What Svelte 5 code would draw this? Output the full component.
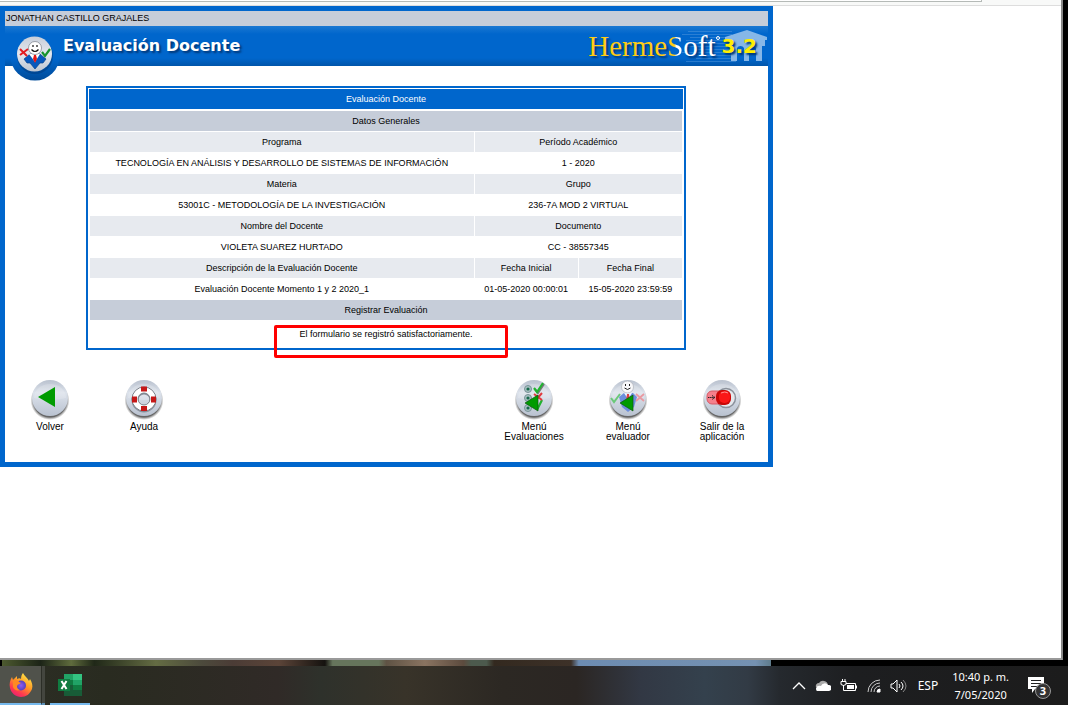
<script>
  const user = 'JONATHAN CASTILLO GRAJALES';
  const sections = [
    ['Programa', 'Período Académico', 'TECNOLOGÍA EN ANÁLISIS Y DESARROLLO DE SISTEMAS DE INFORMACIÓN', '1 - 2020'],
    ['Materia', 'Grupo', '53001C - METODOLOGÍA DE LA INVESTIGACIÓN', '236-7A MOD 2 VIRTUAL'],
    ['Nombre del Docente', 'Documento', 'VIOLETA SUAREZ HURTADO', 'CC - 38557345']
  ];
  const left = [
    { id: 'back', label: ['Volver'] },
    { id: 'help', label: ['Ayuda'] }
  ];
  const right = [
    { id: 'list', label: ['Menú', 'Evaluaciones'] },
    { id: 'person', label: ['Menú', 'evaluador'] },
    { id: 'exit', label: ['Salir de la', 'aplicación'] }
  ];
</script>

{#snippet disc(id)}
  <svg class="disc" viewBox="0 0 40 40" aria-hidden="true">
    <defs>
      <linearGradient id="face-{id}" x1="0" y1="0" x2="0" y2="1">
        <stop offset="0" stop-color="#b9c1ce" />
        <stop offset=".35" stop-color="#dce2eb" />
        <stop offset="1" stop-color="#b9c2d0" />
      </linearGradient>
      <radialGradient id="shade-{id}">
        <stop offset=".85" stop-color="#555" stop-opacity=".9" />
        <stop offset="1" stop-color="#888" stop-opacity="0" />
      </radialGradient>
    </defs>
    <circle cx="20" cy="20.500" r="19.500" fill="url(#shade-{id})" />
    <circle cx="20" cy="18" r="18" fill="url(#face-{id})" />
    <path d="M4 18a16 14 0 0 1 32 0q-16 4-32 0z" fill="#fff" opacity=".18" />
    {#if id === 'back'}
      <path d="M8 17 25 7v20z" fill="#009b00" />
    {:else if id === 'help'}
      <circle cx="20" cy="20" r="9" fill="none" stroke="#8b929d" stroke-width="7" />
      <circle cx="20" cy="19" r="9" fill="none" stroke="#fff" stroke-width="6" />
      <circle cx="20" cy="19" r="12" fill="none" stroke="#70767f" stroke-width=".9" />
      <circle cx="20" cy="19" r="6" fill="none" stroke="#70767f" stroke-width=".9" />
      <path d="M17 6.500h6v5h-6zM17 26h6v5h-6zM8 16.500h5v6H8zM27 16.500h5v6h-5z" fill="#c51818" />
    {:else if id === 'list'}
      {#each [9, 18, 28] as y}
        <circle cx="14" cy={y} r="3.500" fill="#a9bfc2" stroke="#779297" />
        <circle cx="14" cy={y} r="1.600" fill="#176a4b" />
      {/each}
      <path d="m20 8 3 4 6-9" fill="none" stroke="#777" stroke-width="2" transform="translate(1 1)" />
      <path d="m20 8 3 4 6-9M21 25l3 3 4-8" fill="none" stroke="#20b32f" stroke-width="2.200" />
      <path d="m20 14 8 6m0-7-7 8" stroke="#e13a3e" stroke-width="2" />
      <path d="M11 23 24 15v16z" fill="#009b00" stroke="#0b580b" stroke-width=".7" />
    {:else if id === 'person'}
      <path d="m11 17 5-4h9l4 4-3 10-6 5-6-5z" fill="#6c8edb" />
      <path d="m16 13 4 6 4-6-4-2z" fill="#f2f5ff" />
      <path d="m19 14 2 0 1 7-2 3-2-3z" fill="#d94040" />
      <circle cx="19.500" cy="7" r="6" fill="#f8f8fa" stroke="#adb1b9" stroke-width=".7" />
      <path d="M17.500 4v2M21.500 4v2M16.500 8q3 3 6 0" fill="none" stroke="#222" />
      <path d="m3 18 3 4 6-8" fill="none" stroke="#6ac978" stroke-width="2" />
      <path d="m28 14 8 7m0-7-8 7" stroke="#e99aa2" stroke-width="1.800" />
      <path d="M12 23 25 15v16z" fill="#009b00" stroke="#0b580b" stroke-width=".7" />
    {:else}
      <circle cx="24" cy="18" r="9.500" fill="#e5e8ed" stroke="#8b919b" stroke-width="1.500" />
      <rect x="5" y="11" width="19" height="13" rx="5" fill="#f5808c" stroke="#d65b66" />
      <path d="M6 17.500h7m-3-2 3 2-3 2" fill="none" stroke="#222" stroke-dasharray="1.500 .6" />
      <rect x="14" y="10" width="15" height="15" rx="6" fill="#c90808" />
      <rect x="17" y="11" width="11" height="12" rx="5" fill="#fa1717" />
      <path d="M19 13q4-2 7 0" stroke="#ff8b8b" fill="none" />
    {/if}
  </svg>
{/snippet}

{#snippet action(item)}
  <button class="action">
    {@render disc(item.id)}
    <span>{#each item.label as line}<span class="line">{line}</span>{/each}</span>
  </button>
{/snippet}

<div class="desktop">
  <div class="window">
    <div class="chrome"><div class="urlbar"></div></div>
    <main>
      <div class="user">{user}</div>
      <header>
        <svg class="badge" viewBox="0 0 50 50" aria-hidden="true">
          <defs>
            <linearGradient id="ring" x1="0" y1="0" x2="0" y2="1">
              <stop offset=".55" stop-color="#0066cc" />
              <stop offset="1" stop-color="#004b99" />
            </linearGradient>
            <linearGradient id="plate" x1="0" y1="0" x2="0" y2="1">
              <stop offset="0" stop-color="#c7ced9" />
              <stop offset=".5" stop-color="#e4e8ef" />
              <stop offset="1" stop-color="#bcc4d0" />
            </linearGradient>
          </defs>
          <circle cx="25" cy="25" r="24.500" fill="url(#ring)" />
          <circle cx="25" cy="25" r="18" fill="#003f86" opacity=".6" />
          <circle cx="24.500" cy="23" r="17.500" fill="url(#plate)" />
          <path d="m14 28 6-5h10l6 5-3 4h-3l-5 6-5-6h-3z" fill="#0758bd" stroke="#07438d" stroke-width=".7" />
          <path d="m19 23 6 8 5-8z" fill="#fff" />
          <path d="m24 24h2l1 4-2 4-2-4z" fill="#e31616" />
          <circle cx="25" cy="17" r="6.500" fill="#fff" stroke="#858a94" stroke-width=".8" />
          <path d="M23 14v2M27 14v2M21.500 18.500q3.500 4 7 0" fill="none" stroke="#111" stroke-width="1.200" />
          <path d="m10 18 7 7m1-7-8 6" stroke="#e21d22" stroke-width="2" />
          <path d="m32 21 3 4 5-7" fill="none" stroke="#16932d" stroke-width="2.200" />
        </svg>
        <h1>Evaluación Docente</h1>
        <svg class="temple" viewBox="0 0 86 40" aria-hidden="true">
          <path d="M6 5.500h44M0 8.500h50M8 11.500h46M4 14.500h50M10 17.500h44M5 20.500h49M12 23.500h42M0 26.500h54M6 29.500h48M14 32.500h40M4 35.500h50" stroke="#5c9ddf" opacity=".45" />
          <path d="M43 11 65 4l20 7v3H43zM47 14h36v6h-3v15h-6V22a4 4 0 0 0-7 0v13h-5V22a4 4 0 0 0-7 0v13h-6V20h-2z" fill="#86b7e8" />
        </svg>
        <div class="brand"><span class="gold">Herme</span><span class="split">S</span><span class="white">oft</span><i></i><b>3.2</b></div>
      </header>
      <div class="tablewrap">
        <table>
          <colgroup><col class="wide" /><col /><col /></colgroup>
          <thead><tr><th class="title" colspan="3">Evaluación Docente</th></tr></thead>
          <tbody>
            <tr class="section"><th colspan="3">Datos Generales</th></tr>
            {#each sections as [a, b, va, vb]}
              <tr class="names"><th>{a}</th><th colspan="2">{b}</th></tr>
              <tr><td>{va}</td><td colspan="2">{vb}</td></tr>
            {/each}
            <tr class="names"><th>Descripción de la Evaluación Docente</th><th>Fecha Inicial</th><th>Fecha Final</th></tr>
            <tr><td>Evaluación Docente Momento 1 y 2 2020_1</td><td>01-05-2020 00:00:01</td><td>15-05-2020 23:59:59</td></tr>
            <tr class="section"><th colspan="3">Registrar Evaluación</th></tr>
            <tr><td class="message" colspan="3">El formulario se registró satisfactoriamente.</td></tr>
          </tbody>
        </table>
        <div class="mark"></div>
      </div>
      <nav>
        <div class="group">{#each left as item}{@render action(item)}{/each}</div>
        <div class="group">{#each right as item}{@render action(item)}{/each}</div>
      </nav>
    </main>
  </div>
  <div class="wallpaper"><div class="photo"></div></div>
  <footer>
    <button class="app active" aria-label="Firefox">
      <svg width="24" height="24" viewBox="0 0 24 24">
        <defs>
          <linearGradient id="fire" x1=".8" y1="0" x2=".2" y2="1">
            <stop offset="0" stop-color="#fff04a" /><stop offset=".45" stop-color="#ff9525" /><stop offset=".75" stop-color="#ff3b4f" /><stop offset="1" stop-color="#e51b78" />
          </linearGradient>
          <radialGradient id="globe"><stop offset="0" stop-color="#8f5cf0" /><stop offset="1" stop-color="#5340bd" /></radialGradient>
        </defs>
        <path d="M14 0c1 3 5 5 6 8l1-2c2 3 3 7 2 10-2 5-6 8-11 8S2 20 1 15C0 11 1 7 3 4l1 3 4-4v3c2-1 3-1 4 0 0-3 1-5 2-6z" fill="url(#fire)" />
        <circle cx="12" cy="12.500" r="5" fill="url(#globe)" />
        <path d="M4 7c3-1 5 0 6 2l2 1c-1 1-3 1-4 3q0 3 3 4c-3 1-6 0-7-3z" fill="#ff8a22" />
      </svg>
    </button>
    <div class="stack"></div>
    <button class="app excel" aria-label="Excel">
      <svg width="24" height="22" viewBox="0 0 24 22">
        <path d="M6 0h9v6H6z" fill="#21a366" /><path d="M15 0h9v6h-9z" fill="#33c481" />
        <path d="M6 6h9v5H6z" fill="#107c41" /><path d="M15 6h9v5h-9z" fill="#21a366" />
        <path d="M6 11h9v5H6z" fill="#185c37" /><path d="M15 11h9v5h-9z" fill="#107c41" />
        <path d="M6 16h18v6H6z" fill="#185c37" /><path d="M0 5h12v12H0z" fill="#107c41" />
        <path d="m3.500 7 5 8m0-8-5 8" stroke="#fff" stroke-width="2" />
      </svg>
    </button>
    <div class="tray">
      <svg width="14" height="12" viewBox="0 0 14 12"><path d="m1 9 6-6 6 6" fill="none" stroke="#fff" stroke-width="1.300" /></svg>
      <svg width="16" height="12" viewBox="0 0 16 12"><path d="M1 7a3 3 0 0 1 3-4 5 5 0 0 1 9 2L6 9z" fill="#aaa" /><path d="M2 11a3 3 0 0 1 1-5q2-.500 3 0a4 4 0 0 1 7-1 3 3 0 0 1 1 6z" fill="#fff" /></svg>
      <svg width="18" height="14" viewBox="0 0 18 14"><path d="M6 4.500h9.500v7H4M16.500 6.500v3M1 2.500h5v3q-2.500 2-5 0zM2.500 0v2M5 0v2M3.500 6v5.500H6" fill="none" stroke="#fff" /><path d="M7 6h7v4H7z" fill="#fff" /></svg>
      <svg width="14" height="14" viewBox="0 0 14 14" fill="none" stroke="#ccc"><path d="M1 13A12 12 0 0 1 13 1M4 13a9 9 0 0 1 9-9M7 13a6 6 0 0 1 6-6" /><path d="M10 13a3 3 0 0 1 3-3v3z" fill="#fff" stroke="#fff" /></svg>
      <svg width="17" height="14" viewBox="0 0 17 14" fill="none" stroke="#fff"><path d="M1 5h2l4-4v12L3 9H1zM9 5q2 2 0 4M11 3q4 4 0 8" /><path d="M13 1q6 6 0 12" stroke="#888" /></svg>
      <span class="lang">ESP</span>
      <div class="clock"><span>10:40 p. m.</span><span>7/05/2020</span></div>
      <button class="notes" aria-label="Notificaciones">
        <svg width="17" height="17" viewBox="0 0 17 17"><path d="M0 0h16v12H7l-3 4v-4H0z" fill="#fff" /><path d="M3 3.500h10M3 6.500h10M3 9.500h6" stroke="#222" /></svg>
        <span>3</span>
      </button>
    </div>
  </footer>
</div>

<style>
  :global(body) { margin: 0; background: #000; }
  .desktop {
    min-height: 100vh;
    display: flex;
    flex-direction: column;
    background: #000;
    font-family: "Liberation Sans", Arial, sans-serif;
    color: #000;
  }
  button { border: 0; padding: 0; background: none; font: inherit; color: inherit; }
  .window {
    flex: 1;
    margin-right: 5px;
    background: #fff;
    border-right: 2px solid #888;
    border-bottom: 2px solid #999;
  }
  .chrome { height: 5px; background: #f8f9f8; border-bottom: 1px solid #ddd; }
  .urlbar { width: 92.500%; height: 1px; background: #fff; border-bottom: 1px solid #b5bab7; border-right: 1px solid #b5bab7; }
  main {
    box-sizing: border-box;
    max-width: 773px;
    border: 5px solid #0066cc;
    padding-bottom: 20px;
  }
  .user { height: 15px; line-height: 15px; background: #c6cdd9; font-size: 9px; padding-left: 1px; }
  header {
    position: relative;
    height: 40px;
    display: flex;
    align-items: center;
    justify-content: space-between;
    padding: 0 11px 0 58px;
    background: linear-gradient(#1b78d2, #0066cc 20%, #0066cc 80%, #0055aa);
  }
  .badge { position: absolute; left: 5px; top: 5px; width: 50px; height: 50px; }
  .temple { position: absolute; right: 0; top: 0; width: 86px; height: 40px; }
  h1 {
    position: relative;
    margin: 0;
    font: bold 16px/38px "DejaVu Sans", Verdana, sans-serif;
    color: #fff;
    text-shadow: 2px 2px 2px #003878;
  }
  .brand {
    position: relative;
    display: flex;
    align-items: center;
    font: 29px/38px "Liberation Serif", serif;
    text-shadow: 2px 2px 2px #003878;
  }
  .gold { color: #ffcc16; }
  .white { color: #fff; }
  .split {
    background: linear-gradient(90deg, #ffcc16 45%, #fff 60%);
    background-clip: text;
    color: transparent;
    text-shadow: none;
  }
  .brand i { width: 2px; height: 2px; border: 1px solid #fff; border-radius: 50%; margin-bottom: 16px; }
  .brand b { margin-left: 2px; color: #ffef00; font: bold 20px/44px "DejaVu Sans", Verdana, sans-serif; }
  .tablewrap {
    position: relative;
    margin: 20px 82px 0 81px;
    border: 2px solid #0066cc;
    padding: 0 1px;
  }
  table { width: 100%; border-collapse: separate; border-spacing: 1px; table-layout: fixed; font-size: 9px; line-height: 12px; }
  .wide { width: 65%; }
  th, td { height: 20px; padding: 0; font-weight: normal; text-align: center; }
  .title { background: #0066cc; color: #fff; box-shadow: -1px 0 #0066cc, 1px 0 #0066cc; }
  .section th { background: #c6cdd9; }
  .names th { background: #e7eaef; }
  tbody::before { content: ""; display: table-row; height: 0; }
  td.message { height: 26px; vertical-align: top; line-height: 26px; }
  .mark { position: absolute; left: 186px; right: 176px; bottom: -10px; height: 27px; border: 3px solid #f00; border-radius: 2px; }
  nav { display: flex; justify-content: space-between; padding: 30px 6px 0 5px; }
  .group { display: flex; gap: 14px; align-items: flex-start; }
  .action { width: 80px; display: flex; flex-direction: column; align-items: center; font-size: 10px; line-height: 10px; }
  .disc { width: 40px; height: 40px; margin-bottom: 2px; }
  .line { display: block; }
  .wallpaper { height: 6px; background: #000; }
  .photo {
    width: 72%;
    height: 6px;
    margin-left: 2px;
    background: linear-gradient(90deg, #4d5a30, #1c2417 5%, #5f6b3d 9%, #202818 12%, #646c43 20%, #4c4a3c 26%, #4b3c36 30%, #5b4438 36%, #15120f 42%, #66755c 43%, #66755c 49%, #5f5344 50%, #8a7461 55%, #5c4b3e 60%, #4c5a4d 61%, #4c5a4d 63%, #33291f 64%, #3d3128 74%, #6d8cb1 75%, #7592b2 98%, #5f7c8c);
  }
  footer {
    height: 39px;
    display: flex;
    background: linear-gradient(90deg, #2c2e25, #292b20 10%, #302a27 26%, #2e312b 30%, #383329 38%, #2c2823 47%, #2b2623 54%, #323844 60%, #34414d 66%, #323b45 70%, #25292e 73%, #1d1e20 80%, #1c1c1c);
    color: #fff;
  }
  .app { width: 41px; display: flex; align-items: center; justify-content: center; border-bottom: 2px solid #76b9ed; }
  .active { background: #50524b; }
  .stack { width: 3px; background: #44463f; border-left: 1px solid #2c2e27; border-bottom: 2px solid #5c8fb5; margin-right: 5px; }
  .excel { width: 40px; }
  .tray { margin-left: auto; display: flex; align-items: center; gap: 9px; padding-right: 15px; font: 12px/18px "Noto Sans", "Open Sans", sans-serif; }
  .lang { margin-left: 2px; }
  .clock { display: flex; flex-direction: column; align-items: center; margin: 0 10px 0 5px; font-size: 11px; }
  .notes { position: relative; width: 25px; height: 17px; display: flex; }
  .notes span {
    position: absolute;
    left: 7px;
    top: 6px;
    width: 14px;
    height: 14px;
    border: 1px solid #999;
    border-radius: 50%;
    background: #333;
    font: bold 11px/14px "Noto Sans", sans-serif;
    text-align: center;
  }
</style>
